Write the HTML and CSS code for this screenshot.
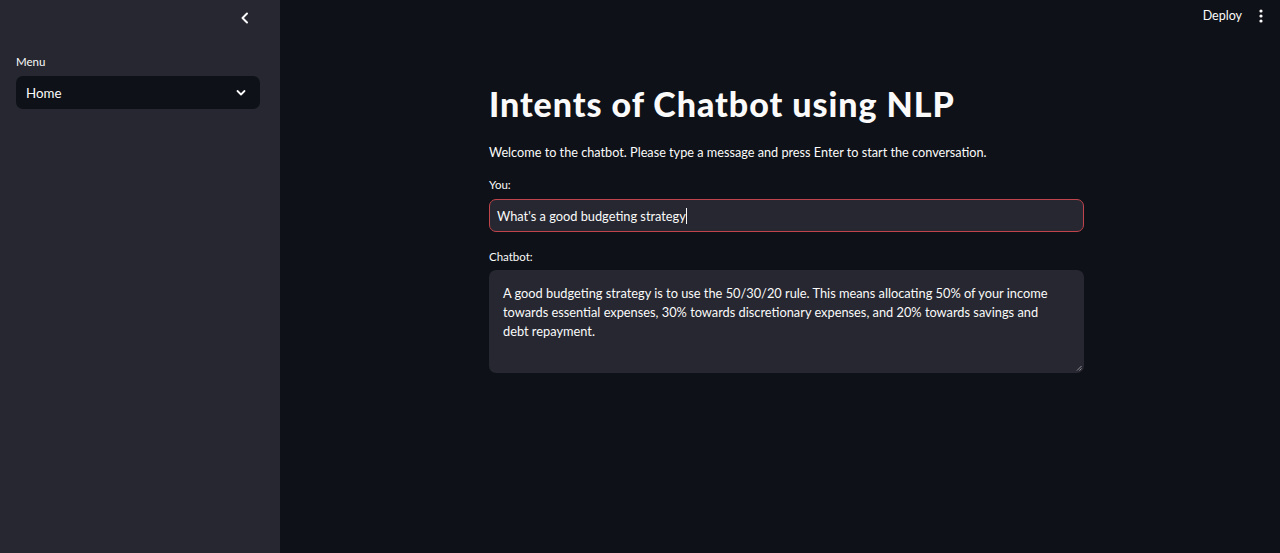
FILE: index.html
```html
<!DOCTYPE html>
<html lang="en">
<head>
<meta charset="utf-8">
<title>Intents of Chatbot using NLP</title>
<link rel="stylesheet" href="styles.css">
</head>
<body>
<div class="app">
  <aside class="sidebar">
    <div class="sb-top">
      <button class="collapse" aria-label="Collapse sidebar">
        <svg width="14" height="14" viewBox="0 0 14 14"><path d="M9 2.5 L4.5 7 L9 11.5" fill="none" stroke="#fafafa" stroke-width="2" stroke-linecap="round" stroke-linejoin="round"/></svg>
      </button>
    </div>
    <div class="sb-content">
      <div class="field-label">Menu</div>
      <div class="select">
        <span>Home</span>
        <svg width="12" height="12" viewBox="0 0 12 12"><path d="M2.5 4 L6 7.5 L9.5 4" fill="none" stroke="#fafafa" stroke-width="1.8" stroke-linecap="round" stroke-linejoin="round"/></svg>
      </div>
    </div>
  </aside>
  <main class="main">
    <header class="topbar">
      <span class="deploy">Deploy</span>
      <svg class="kebab" width="4" height="14" viewBox="0 0 4 14"><circle cx="2" cy="2" r="1.6" fill="#fafafa"/><circle cx="2" cy="7" r="1.6" fill="#fafafa"/><circle cx="2" cy="12" r="1.6" fill="#fafafa"/></svg>
    </header>
    <section class="block">
      <h1 class="title">Intents of Chatbot using NLP</h1>
      <p class="intro">Welcome to the chatbot. Please type a message and press Enter to start the conversation.</p>
      <div class="field-label">You:</div>
      <div class="input">What's a good budgeting strategy<span class="caret"></span></div>
      <div class="field-label chat-label">Chatbot:</div>
      <div class="textarea">
        A good budgeting strategy is to use the 50/30/20 rule. This means allocating 50% of your income towards essential expenses, 30% towards discretionary expenses, and 20% towards savings and debt repayment.
        <svg class="grip" width="6" height="6" viewBox="0 0 6 6"><path d="M1 5.5 L5.5 1 M3.5 5.5 L5.5 3.5" stroke="#9a9aa0" stroke-width="0.9"/></svg>
      </div>
    </section>
  </main>
</div>
</body>
</html>
```

FILE: styles.css
```css
* { box-sizing: border-box; }
html, body { margin: 0; padding: 0; height: 100%; }
body {
  background: #0e1117;
  color: #fafafa;
  font-family: "Lato", "Noto Sans", sans-serif;
}
.app { display: flex; height: 553px; overflow: hidden; }

.sidebar {
  width: 280px;
  flex: 0 0 280px;
  background: #262730;
  display: flex;
  flex-direction: column;
}
.sb-top {
  display: flex;
  justify-content: flex-end;
  padding: 11px 28px 0 0;
  height: 50px;
}
.collapse {
  background: none; border: 0; padding: 0; width: 14px; height: 14px;
  display: flex; align-items: center; justify-content: center;
}
.sb-content { padding: 5px 20px 0 16px; }

.field-label {
  font-size: 11.5px;
  line-height: 14px;
  color: #fafafa;
  margin-bottom: 7px;
}
.select {
  height: 33px;
  background: #0e1117;
  border-radius: 7px;
  display: flex;
  align-items: center;
  justify-content: space-between;
  padding: 0 13px 0 10px;
  font-size: 13.3px;
}

.main { flex: 1; display: flex; flex-direction: column; }
.topbar {
  height: 31px;
  display: flex;
  align-items: center;
  justify-content: flex-end;
  gap: 17px;
  padding: 0 17px 0 0;
}
.deploy { font-size: 12.5px; color: #fafafa; }
.kebab { display: block; }

.block {
  width: 595px;
  margin-left: 209px;
  padding-top: 50px;
}
.title {
  margin: 0;
  font-size: 34px;
  font-weight: 900;
  line-height: 46px;
  letter-spacing: 0.95px;
}
.intro {
  margin: 16px 0 16px;
  font-size: 12.7px;
  line-height: 19px;
}
.input {
  height: 33px;
  border: 1px solid #c0444c;
  border-radius: 7px;
  background: #262730;
  font-size: 12.8px;
  display: flex;
  align-items: center;
  padding: 0 7px;
  margin-bottom: 18px;
}
.caret {
  display: inline-block;
  width: 1px; height: 16px;
  background: #fafafa;
  margin-left: 0;
}
.chat-label { margin-bottom: 6px; }
.textarea {
  position: relative;
  height: 103px;
  background: #262730;
  border-radius: 7px;
  padding: 14px 30px 0 14px;
  font-size: 12.8px;
  line-height: 19px;
}
.grip { position: absolute; right: 2px; bottom: 2px; }
```
